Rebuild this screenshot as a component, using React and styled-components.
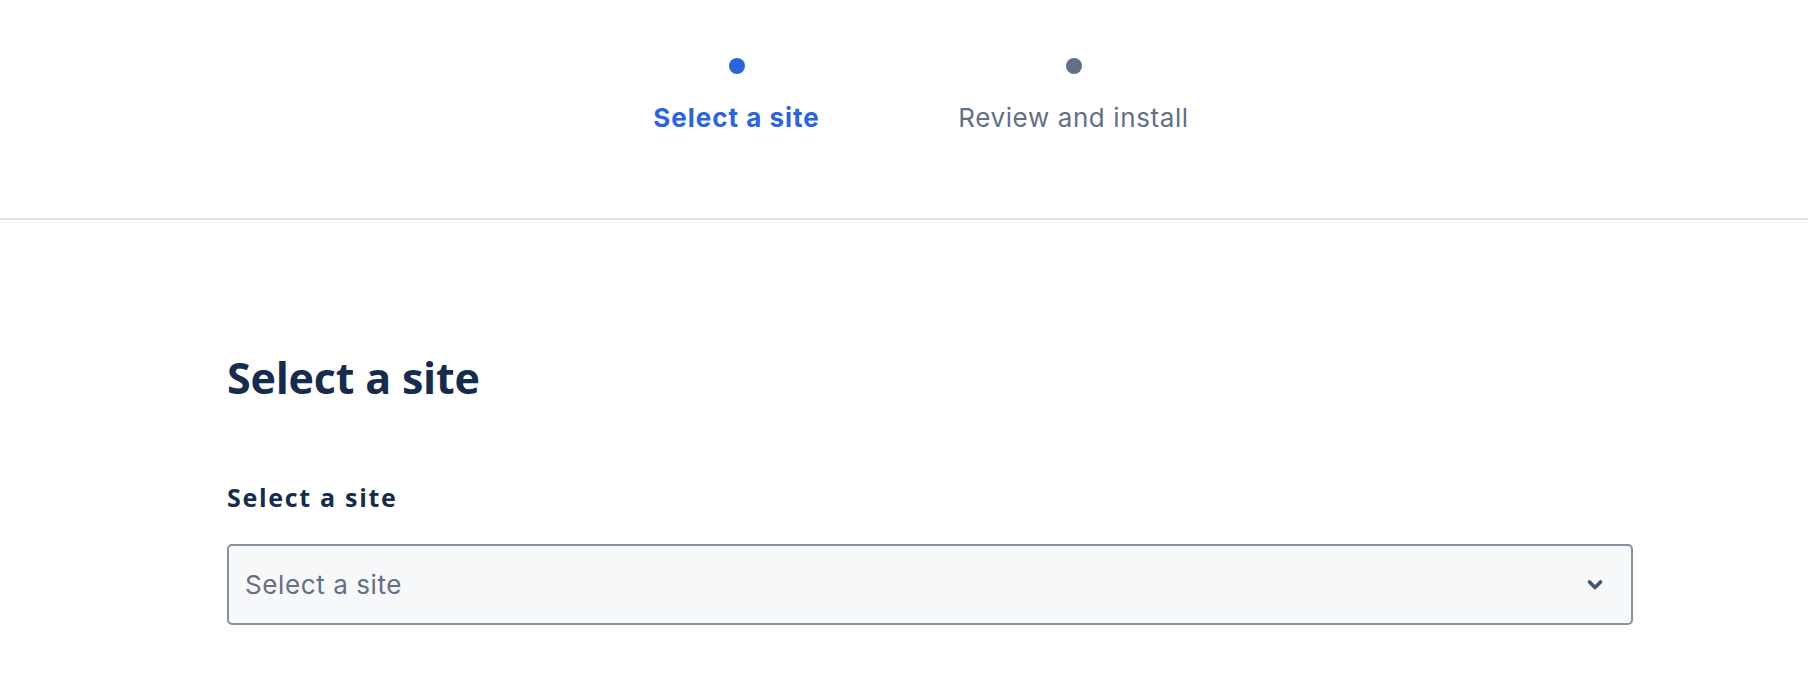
import React from "react";
import styled, { createGlobalStyle } from "styled-components";

const GlobalStyle = createGlobalStyle`
  html, body { margin: 0; padding: 0; background: #ffffff; }
  body { font-family: Inter, "Noto Sans", sans-serif; }
  * { box-sizing: border-box; }
`;

const Page = styled.div`
  width: 1808px;
  min-height: 698px;
  background: #ffffff;
`;

const Header = styled.header`
  height: 220px;
  border-bottom: 2px solid #dfe1e6;
  display: flex;
  justify-content: center;
  padding-top: 58px;
  padding-left: 2px;
`;

const Tracker = styled.ol`
  list-style: none;
  margin: 0;
  padding: 0;
  display: grid;
  grid-template-columns: repeat(2, 337px);
`;

const Step = styled.li`
  display: flex;
  flex-direction: column;
  align-items: center;
  gap: 29px;
`;

const Dot = styled.span`
  width: 16px;
  height: 16px;
  border-radius: 50%;
  background: ${(p) => (p.$active ? "#2c64dc" : "#626f86")};
`;

const StepLabel = styled.span`
  font-family: Inter, sans-serif;
  font-size: 26px;
  line-height: 30px;
  font-weight: ${(p) => (p.$active ? 700 : 400)};
  letter-spacing: ${(p) => (p.$active ? "1px" : "0.6px")};
  color: ${(p) => (p.$active ? "#2c64dc" : "#626f86")};
  white-space: nowrap;
`;

const Main = styled.main`
  padding: 134px 0 0 227px;
  width: 1633px;
`;

const Title = styled.h1`
  margin: 0;
  font-family: "Open Sans", Lato, sans-serif;
  font-size: 43px;
  line-height: 48px;
  font-weight: 700;
  color: #172b4d;
  letter-spacing: -0.2px;
`;

const Field = styled.div`
  margin-top: 80px;
  display: flex;
  flex-direction: column;
  gap: 32px;
`;

const Label = styled.label`
  font-family: "Open Sans", Lato, sans-serif;
  font-size: 25px;
  line-height: 30px;
  font-weight: 700;
  letter-spacing: 1.7px;
  color: #172b4d;
`;

const SelectBox = styled.div`
  height: 81px;
  border: 2px solid #8590a2;
  border-radius: 5px;
  background: #f7f8f9;
  display: flex;
  align-items: center;
  justify-content: space-between;
  padding: 0 27px 0 16px;
`;

const Placeholder = styled.span`
  font-family: Inter, sans-serif;
  font-size: 26px;
  letter-spacing: 0.6px;
  color: #626f86;
`;

const Chevron = () => (
  <svg width="18" height="12" viewBox="0 0 18 12" aria-hidden="true">
    <path d="M3.5 3 L9 8.5 L14.5 3" fill="none" stroke="#44546f" strokeWidth="3.6" strokeLinecap="round" strokeLinejoin="round" />
  </svg>
);

export default function App() {
  return (
    <Page>
      <GlobalStyle />
      <Header>
        <Tracker>
          <Step>
            <Dot $active />
            <StepLabel $active>Select a site</StepLabel>
          </Step>
          <Step>
            <Dot />
            <StepLabel>Review and install</StepLabel>
          </Step>
        </Tracker>
      </Header>
      <Main>
        <Title>Select a site</Title>
        <Field>
          <Label>Select a site</Label>
          <SelectBox role="combobox">
            <Placeholder>Select a site</Placeholder>
            <Chevron />
          </SelectBox>
        </Field>
      </Main>
    </Page>
  );
}
